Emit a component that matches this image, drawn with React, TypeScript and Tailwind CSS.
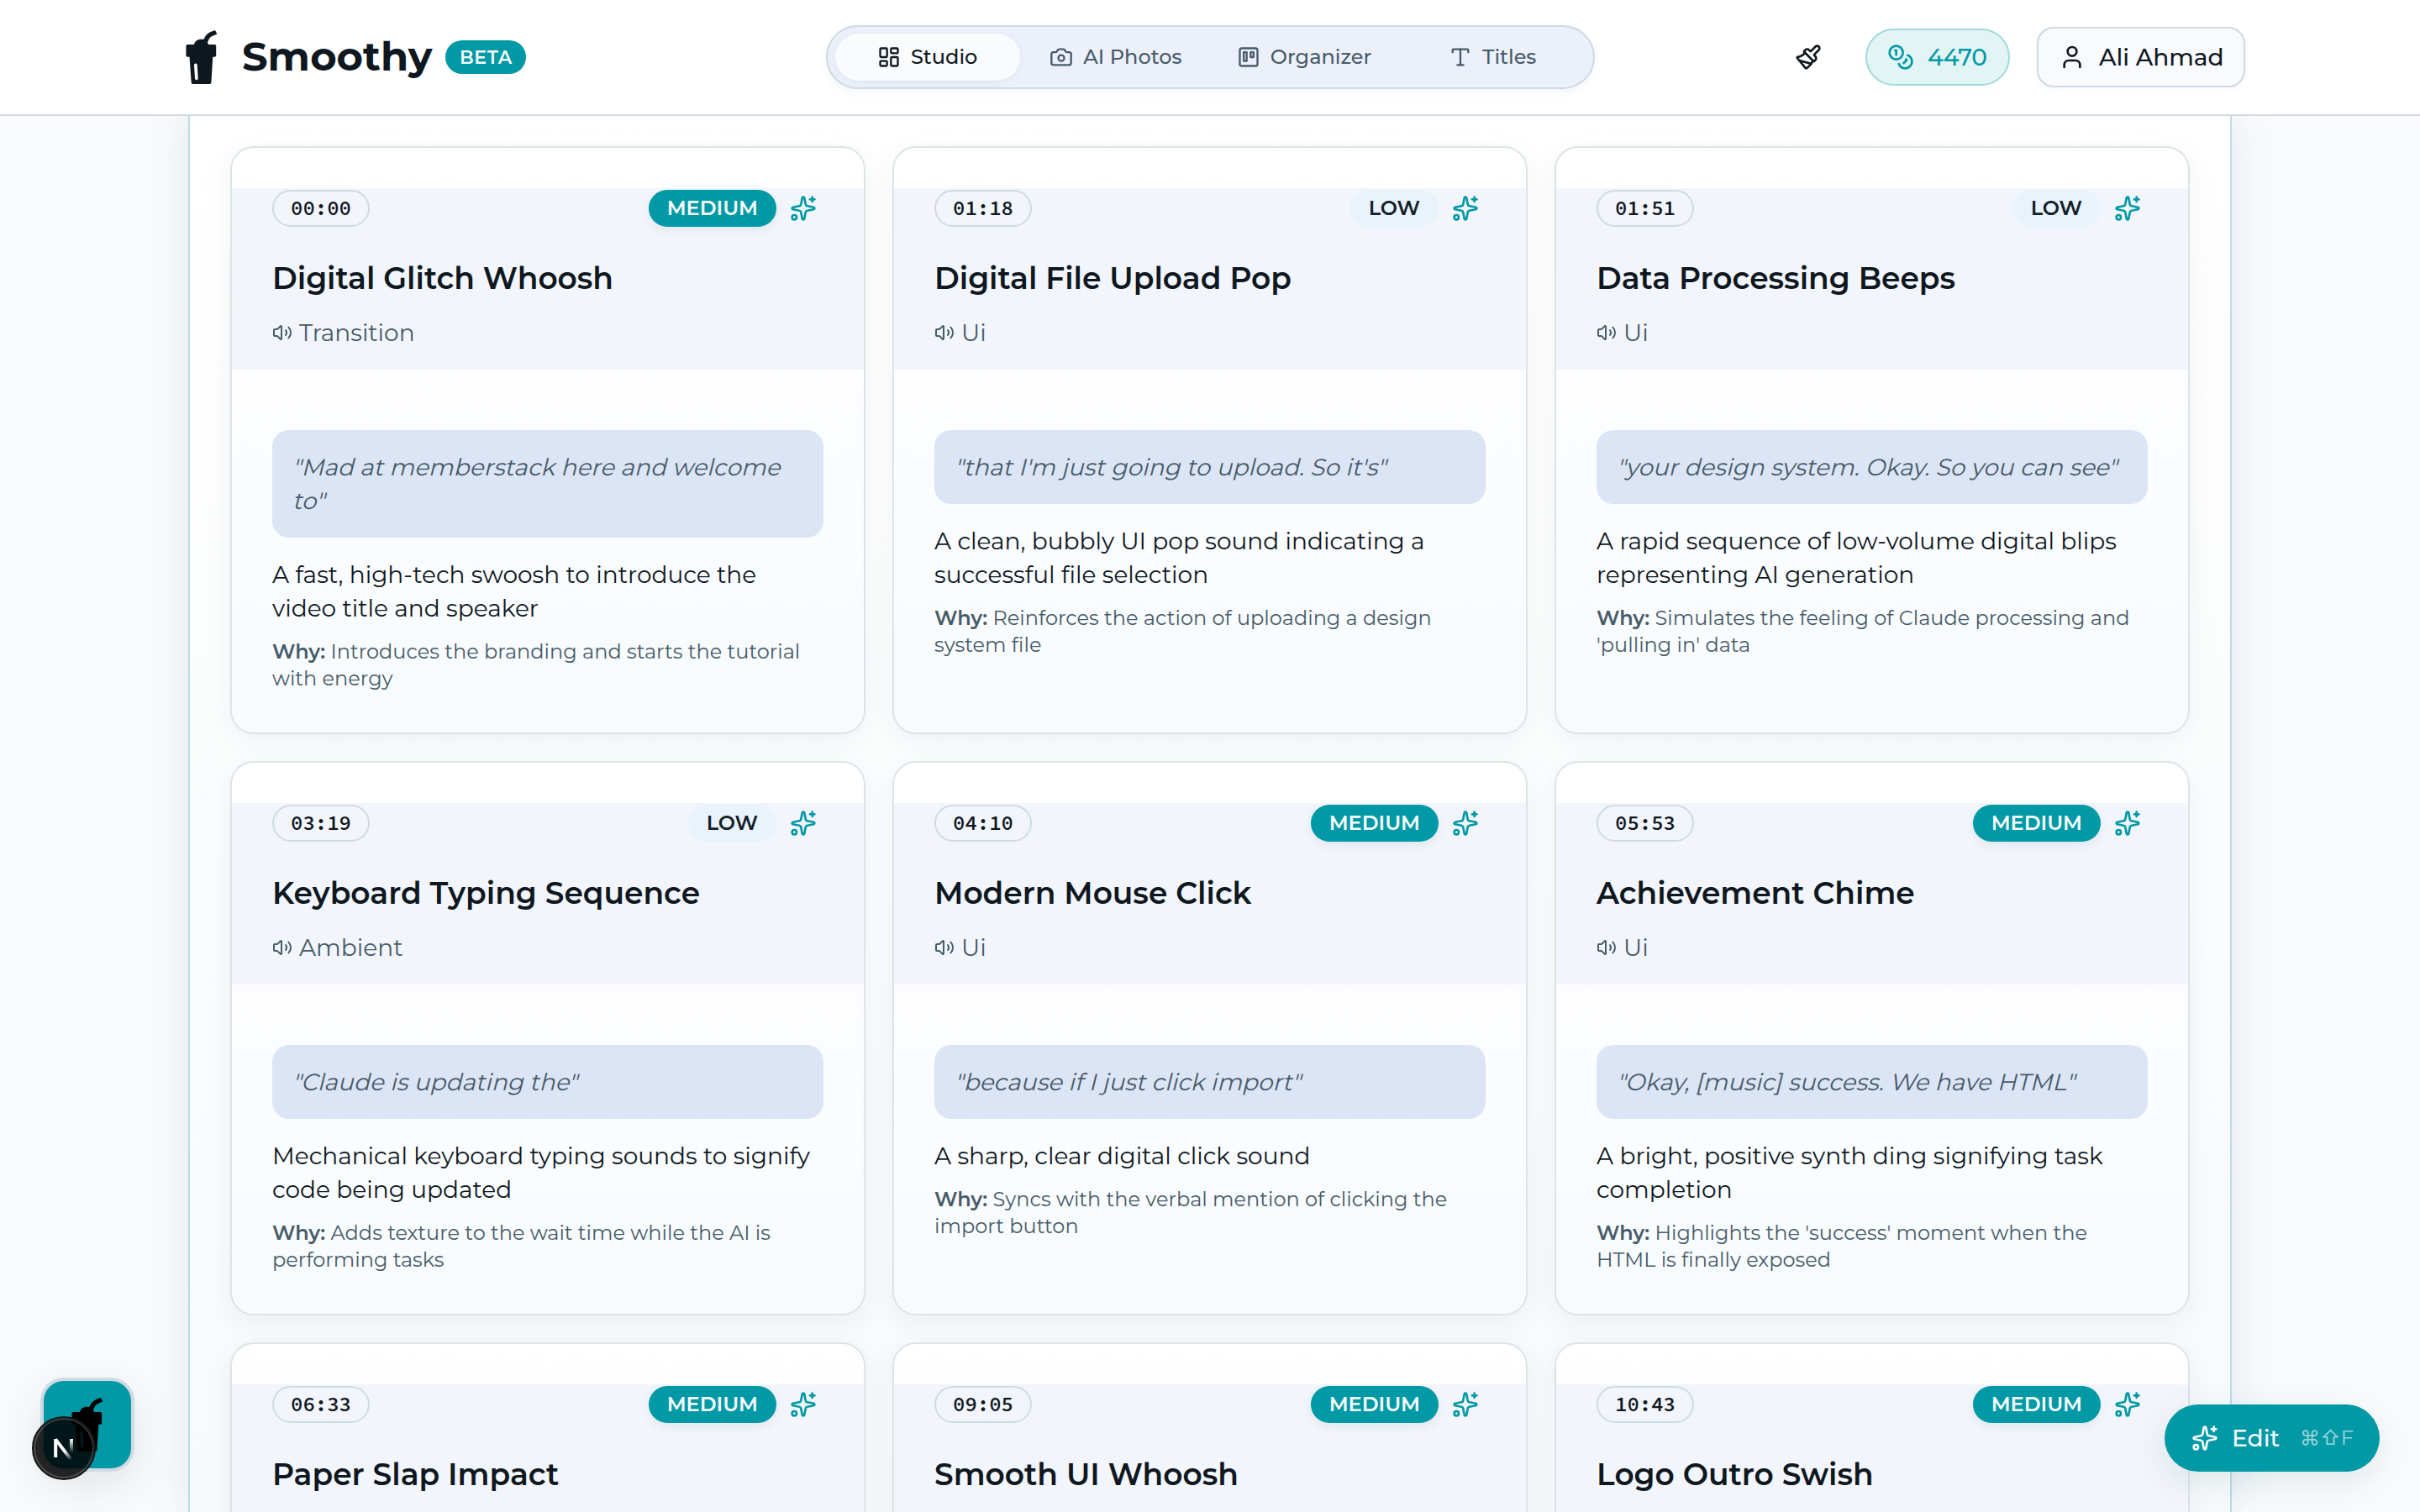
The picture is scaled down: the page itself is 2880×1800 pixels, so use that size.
import { Camera, Coins, LayoutDashboard, Paintbrush, Sparkles, Trello, Type, User, Volume2 } from 'lucide-react';
import type { LucideIcon } from 'lucide-react';
import { clsx } from 'clsx';

type Intensity = 'LOW' | 'MEDIUM';

interface SoundEffect {
  time: string;
  intensity: Intensity;
  title: string;
  category: string;
  quote?: string[];
  description?: string;
  why?: string;
}

const effects: SoundEffect[] = [
  {
    time: '00:00',
    intensity: 'MEDIUM',
    title: 'Digital Glitch Whoosh',
    category: 'Transition',
    quote: ['"Mad at memberstack here and welcome', 'to"'],
    description: 'A fast, high-tech swoosh to introduce the video title and speaker',
    why: 'Introduces the branding and starts the tutorial with energy',
  },
  {
    time: '01:18',
    intensity: 'LOW',
    title: 'Digital File Upload Pop',
    category: 'Ui',
    quote: ['"that I\'m just going to upload. So it\'s"'],
    description: 'A clean, bubbly UI pop sound indicating a successful file selection',
    why: 'Reinforces the action of uploading a design system file',
  },
  {
    time: '01:51',
    intensity: 'LOW',
    title: 'Data Processing Beeps',
    category: 'Ui',
    quote: ['"your design system. Okay. So you can see"'],
    description: 'A rapid sequence of low-volume digital blips representing AI generation',
    why: "Simulates the feeling of Claude processing and 'pulling in' data",
  },
  {
    time: '03:19',
    intensity: 'LOW',
    title: 'Keyboard Typing Sequence',
    category: 'Ambient',
    quote: ['"Claude is updating the"'],
    description: 'Mechanical keyboard typing sounds to signify code being updated',
    why: 'Adds texture to the wait time while the AI is performing tasks',
  },
  {
    time: '04:10',
    intensity: 'MEDIUM',
    title: 'Modern Mouse Click',
    category: 'Ui',
    quote: ['"because if I just click import"'],
    description: 'A sharp, clear digital click sound',
    why: 'Syncs with the verbal mention of clicking the import button',
  },
  {
    time: '05:53',
    intensity: 'MEDIUM',
    title: 'Achievement Chime',
    category: 'Ui',
    quote: ['"Okay, [music] success. We have HTML"'],
    description: 'A bright, positive synth ding signifying task completion',
    why: "Highlights the 'success' moment when the HTML is finally exposed",
  },
  { time: '06:33', intensity: 'MEDIUM', title: 'Paper Slap Impact', category: '' },
  { time: '09:05', intensity: 'MEDIUM', title: 'Smooth UI Whoosh', category: '' },
  { time: '10:43', intensity: 'MEDIUM', title: 'Logo Outro Swish', category: '' },
];

const navItems: { label: string; icon: LucideIcon; active?: boolean }[] = [
  { label: 'Studio', icon: LayoutDashboard, active: true },
  { label: 'AI Photos', icon: Camera },
  { label: 'Organizer', icon: Trello },
  { label: 'Titles', icon: Type },
];

// Cup with a bent straw; the highlight is a hole so the background shows through
function CupLogo({ className }: { className?: string }) {
  return (
    <svg viewBox="0 0 64 64" className={className} fill="currentColor">
      <path d="M34 13C34.6 9.6 36.4 6.6 38.7 4.4C41.2 2.3 44.6 1.2 48 0L50.3 4.4L43.4 7.6C41.4 8.8 40.2 11.4 39 14.4Z" />
      <path d="M22.7 17.6C23.6 13.4 27 10.8 31.3 10.8H36C38 12 39.6 14.6 40 17.6Z" />
      <rect x="13.4" y="17" width="35.8" height="14.8" rx="1.8" />
      <path
        fillRule="evenodd"
        d="M17.4 30H45.4L43.4 62.2Q43.3 64 41.5 64H21.5Q19.8 64 19.7 62.2ZM23 41.5L24 57.4A1.85 1.85 0 0 0 27.7 57.2L26.7 41.3A1.85 1.85 0 0 0 23 41.5Z"
      />
    </svg>
  );
}

function Header() {
  return (
    <header className="relative z-10 flex h-[138px] shrink-0 items-center justify-between border-b-2 border-[#cfdbe4] bg-white px-52">
      <div className="flex w-[774px] items-center">
        <CupLogo className="size-16" />
        <span className="ml-4 pb-0.5 text-5xl font-bold">Smoothy</span>
        <span className="ml-4 flex h-10 w-24 items-center justify-center rounded-full bg-[#0099a5] text-[22px] font-semibold tracking-wide text-[#f8fbfd]">
          BETA
        </span>
      </div>

      <nav className="grid w-[915px] grid-cols-4 gap-1 rounded-full border-2 border-[#cdd9e3] bg-[#ecf0fa] px-[9px] py-2 shadow-[0_4px_12px_rgba(20,80,90,0.05)]">
        {navItems.map(({ label, icon: Icon, active }) => (
          <div
            key={label}
            className={clsx(
              'flex h-14 items-center justify-center gap-3 rounded-full text-2xl font-medium',
              active ? 'bg-[#f9fbfd] text-[#0f181f] shadow-[0_2px_8px_rgba(20,80,110,0.06)]' : 'text-[#475b69]',
            )}
          >
            <Icon className="size-7" />
            {label}
          </div>
        ))}
      </nav>

      <div className="flex w-[774px] items-center justify-end">
        <Paintbrush className="mr-[52px] size-8" />
        <div className="mr-8 flex h-[68px] w-[172px] items-center gap-4 rounded-full border-2 border-[#9fd9dc] bg-[#e3f4f5] pl-6 text-[28px] font-medium text-[#0099a5]">
          <Coins className="size-8" />
          4470
        </div>
        <div className="flex h-[72px] w-[248px] items-center gap-4 rounded-[20px] border-2 border-[#cdd9e3] bg-[#f9fafd] pl-6 text-[28px] font-medium whitespace-nowrap shadow-[0_2px_6px_rgba(20,80,90,0.04)]">
          <User className="size-8 shrink-0" />
          Ali Ahmad
        </div>
      </div>
    </header>
  );
}

function IntensityBadge({ intensity }: { intensity: Intensity }) {
  return (
    <span
      className={clsx(
        'flex h-11 items-center rounded-full px-[22px] text-2xl font-semibold',
        intensity === 'MEDIUM'
          ? 'bg-[#0099a5] text-[#f8fbfd] shadow-[0_4px_12px_rgba(20,80,110,0.08)]'
          : 'bg-[#e8f3fc] text-[#14202a]',
      )}
    >
      {intensity}
    </span>
  );
}

function EffectCard({ effect }: { effect: SoundEffect }) {
  return (
    <article className="overflow-hidden rounded-[28px] border-2 border-[#dce4e8] bg-linear-to-b from-white via-[#fcfdff] to-[#f7fbfd] pt-12 shadow-[0_8px_32px_rgba(20,50,60,0.06)]">
      <div className="bg-[#f2f5fb] px-12 pb-6">
        <div className="flex h-12 items-center">
          <span className="flex h-11 items-center rounded-full border-2 border-[#cfdbe3] px-5 font-['Source_Code_Pro','Liberation_Mono',monospace] text-2xl font-semibold">
            {effect.time}
          </span>
          <div className="ml-auto flex items-center gap-2">
            <IntensityBadge intensity={effect.intensity} />
            <span className="flex size-12 items-center justify-center text-[#0099a5]">
              <Sparkles className="size-8" />
            </span>
          </div>
        </div>
        <h3 className="mt-8 text-4xl leading-[54px] font-semibold">{effect.title}</h3>
        <div className="mt-[18px] flex h-10 items-center gap-2 text-[28px] text-[#475b69]">
          <Volume2 className="size-6" />
          {effect.category}
        </div>
      </div>

      {effect.quote && (
        <div className="px-12 pt-[72px] pb-12">
          {/* Slanted upright face, each line sheared around its own baseline */}
          <p className="rounded-[20px] bg-[#dce5f6] p-6 text-[28px] leading-10 text-[#475b69]">
            {effect.quote.map((line) => (
              <span key={line} className="block origin-[0_75%] skew-x-[-14deg] whitespace-nowrap">
                {line}
              </span>
            ))}
          </p>
          <p className="mt-6 text-[28px] leading-10">{effect.description}</p>
          <p className="mt-4 text-2xl leading-8 text-[#475b69]">
            <strong className="font-semibold">Why:</strong> {effect.why}
          </p>
        </div>
      )}
    </article>
  );
}

// Floating app launcher with the dev tools badge over its corner
function Launcher() {
  return (
    <div className="absolute top-[1640px] left-12 z-20">
      <div className="flex size-28 items-center justify-center rounded-[28px] border-4 border-[#d0dae3] bg-[#0099a5] text-black shadow-[0_16px_48px_rgba(10,60,60,0.1)]">
        <CupLogo className="size-16" />
      </div>
      <div className="absolute top-[46px] -left-2.5 flex size-[76px] items-center justify-center rounded-full border-2 border-[#161616] bg-black/85 shadow-[inset_0_0_0_2px_rgba(255,255,255,0.2)]">
        <svg viewBox="0 0 28 28" className="size-7" fill="none" strokeWidth="4">
          <defs>
            <linearGradient id="diagonal" x1="16" y1="17" x2="24" y2="27" gradientUnits="userSpaceOnUse">
              <stop stopColor="#fff" />
              <stop offset="1" stopColor="#fff" stopOpacity="0" />
            </linearGradient>
            <linearGradient id="stem" x1="0" y1="3" x2="0" y2="20" gradientUnits="userSpaceOnUse">
              <stop stopColor="#fff" />
              <stop offset="1" stopColor="#fff" stopOpacity="0" />
            </linearGradient>
          </defs>
          <path d="M4.2 25V3" stroke="#fff" />
          <path d="M4 3.4L23.4 28.6" stroke="url(#diagonal)" />
          <rect x="21" y="3" width="4" height="17" fill="url(#stem)" />
        </svg>
      </div>
    </div>
  );
}

export default function App() {
  return (
    <div className="relative flex h-[1800px] w-[2880px] flex-col overflow-hidden bg-[#f9fafc] font-['Montserrat','Inter',sans-serif] text-[#0f181f]">
      <Header />

      <main className="mx-auto h-[1662px] w-[2432px] border-x-2 border-[#bddbe4] bg-linear-to-b from-white to-[#f7fafc] px-12 pt-9 shadow-[0_0_48px_rgba(60,120,160,0.13)]">
        <div className="grid grid-cols-3 gap-8">
          {effects.map((effect) => (
            <EffectCard key={effect.time} effect={effect} />
          ))}
        </div>
      </main>

      <Launcher />
      <button className="absolute top-[1672px] left-[2576px] z-20 flex h-20 w-64 items-center rounded-full bg-[#0099a5] pl-8 text-[28px] font-medium text-[#f8fbfd] shadow-[0_12px_40px_rgba(10,80,90,0.1)]">
        <Sparkles className="mr-4 size-8" />
        Edit
        <span className="ml-6 text-2xl font-normal opacity-60">⌘⇧F</span>
      </button>
    </div>
  );
}
